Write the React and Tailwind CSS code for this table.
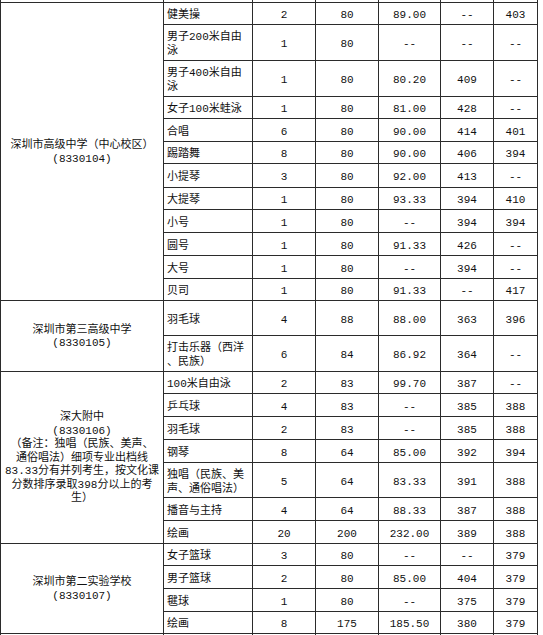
import React from "react";

const groups = [
  {
    span: "row-span-12",
    name: ["深圳市高级中学（中心校区）", "(8330104)"],
    rows: [
      [["健美操"], "2", "80", "89.00", "--", "403"],
      [["男子200米自由", "泳"], "1", "80", "--", "--", "--"],
      [["男子400米自由", "泳"], "1", "80", "80.20", "409", "--"],
      [["女子100米蛙泳"], "1", "80", "81.00", "428", "--"],
      [["合唱"], "6", "80", "90.00", "414", "401"],
      [["踢踏舞"], "8", "80", "90.00", "406", "394"],
      [["小提琴"], "3", "80", "92.00", "413", "--"],
      [["大提琴"], "1", "80", "93.33", "394", "410"],
      [["小号"], "1", "80", "--", "394", "394"],
      [["圆号"], "1", "80", "91.33", "426", "--"],
      [["大号"], "1", "80", "--", "394", "--"],
      [["贝司"], "1", "80", "91.33", "--", "417"],
    ],
  },
  {
    span: "row-span-2",
    name: ["深圳市第三高级中学", "(8330105)"],
    rows: [
      [["羽毛球"], "4", "88", "88.00", "363", "396"],
      [["打击乐器（西洋", "、民族）"], "6", "84", "86.92", "364", "--"],
    ],
  },
  {
    span: "row-span-7",
    name: [
      "深大附中",
      "(8330106)",
      "（备注：独唱（民族、美声、",
      "通俗唱法）细项专业出档线",
      "83.33分有并列考生，按文化课",
      "分数排序录取398分以上的考",
      "生）",
    ],
    rows: [
      [["100米自由泳"], "2", "83", "99.70", "387", "--"],
      [["乒乓球"], "4", "83", "--", "385", "388"],
      [["羽毛球"], "2", "83", "--", "385", "388"],
      [["钢琴"], "8", "64", "85.00", "392", "394"],
      [["独唱（民族、美", "声、通俗唱法）"], "5", "64", "83.33", "391", "388"],
      [["播音与主持"], "4", "64", "88.33", "387", "388"],
      [["绘画"], "20", "200", "232.00", "389", "388"],
    ],
  },
  {
    span: "row-span-4",
    name: ["深圳市第二实验学校", "(8330107)"],
    rows: [
      [["女子篮球"], "3", "80", "--", "--", "379"],
      [["男子篮球"], "2", "80", "85.00", "404", "379"],
      [["毽球"], "1", "80", "--", "375", "379"],
      [["绘画"], "8", "175", "185.50", "380", "379"],
    ],
  },
];

const cell = "border-r border-b border-[#2b2b2b]";

function Lines({ lines }) {
  return lines.map((l, i) => (
    <React.Fragment key={i}>
      {i > 0 && <br />}
      {l}
    </React.Fragment>
  ));
}

function EmptyRow({ prefix }) {
  return [0, 1, 2, 3, 4, 5, 6].map((i) => (
    <div key={prefix + i} className={cell} />
  ));
}

export default function App() {
  return (
    <div className="w-[543px] h-[635px] overflow-hidden bg-white">
      <div className="grid w-[538px] border-l border-[#2b2b2b] grid-cols-[163px_89px_63px_63px_62px_53px_44px] grid-rows-[3px_22px_36px_36px_22px_23px_22px_24px_22px_23px_23px_23px_22px_35px_36px_22px_23px_23px_23px_35px_23px_23px_22px_23px_23px_22px_30px] font-['Liberation_Mono','Noto_Sans_CJK_SC',monospace] text-[11px] leading-[14px] text-[#111]">
        <EmptyRow prefix="top" />
        {groups.map((g, gi) => (
          <React.Fragment key={gi}>
            <div
              className={`${cell} ${g.span} col-start-1 flex items-center justify-center text-center whitespace-nowrap leading-[13.5px] pt-[2px]`}
            >
              <div>
                <Lines lines={g.name} />
              </div>
            </div>
            {g.rows.map((r, ri) => (
              <React.Fragment key={ri}>
                <div
                  className={`${cell} col-start-2 flex items-center pl-[3px] pt-[3px] whitespace-nowrap`}
                >
                  <div>
                    <Lines lines={r[0]} />
                  </div>
                </div>
                {r.slice(1).map((v, vi) => (
                  <div
                    key={vi}
                    className={`${cell} flex items-center justify-center pt-[3px] whitespace-nowrap`}
                  >
                    {v}
                  </div>
                ))}
              </React.Fragment>
            ))}
          </React.Fragment>
        ))}
        <EmptyRow prefix="bottom" />
      </div>
    </div>
  );
}
